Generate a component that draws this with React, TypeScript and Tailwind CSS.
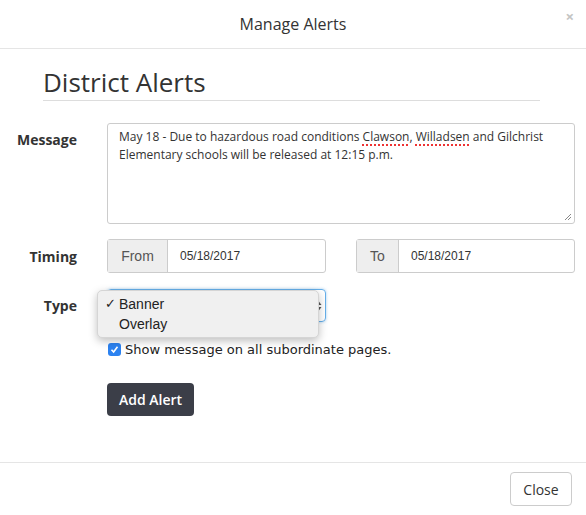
import React from "react";

const openSans = "font-['Open_Sans',sans-serif]";
const helv = "font-['Liberation_Sans',Arial,sans-serif]";

function DateGroup(props: { label: string; value: string; addonW: string }) {
  return (
    <div className="flex h-[34px] w-[219px] rounded-[3px] border border-[#ccc]">
      <div
        className={
          "flex items-center justify-center border-r border-[#ccc] bg-[#eee] text-[14px] text-[#555] " +
          helv +
          " " +
          props.addonW
        }
      >
        {props.label}
      </div>
      <div className={"flex flex-1 items-center pl-3 text-[12px] text-[#333] " + helv}>{props.value}</div>
    </div>
  );
}

export default function App() {
  return (
    <div className={"relative h-[515px] w-[586px] bg-white text-[#333] " + openSans}>
      {/* header */}
      <div className="relative flex h-[49px] items-center justify-center border-b border-[#e5e5e5]">
        <span className="text-[16px] text-[#333]">Manage Alerts</span>
        <span className="absolute right-[12px] top-[5px] text-[15px] font-bold text-[#c4c4c4]">×</span>
      </div>

      <div className="px-[43px] pt-[15px]">
        <h2 className="w-[497px] border-b border-[#ddd] text-[26px] leading-[36px] text-[#333]">
          District Alerts
        </h2>
      </div>

      {/* form */}
      <div className="mt-[22px] flex flex-col">
        <div className="flex">
          <div className="w-[77px] pt-[6px] text-right text-[14px] font-bold">Message</div>
          <div className="relative ml-[30px] h-[101px] w-[468px] rounded-[3px] border border-[#ccc] px-[11px] pt-[4px] text-[12px] leading-[18px] text-[#333]">
            May 18 - Due to hazardous road conditions{" "}
            <span className="underline decoration-[#e33] decoration-dotted decoration-[1.5px] underline-offset-[3px]">
              Clawson
            </span>
            ,{" "}
            <span className="underline decoration-[#e33] decoration-dotted decoration-[1.5px] underline-offset-[3px]">
              Willadsen
            </span>{" "}
            and Gilchrist Elementary schools will be released at 12:15 p.m.
            <svg className="absolute bottom-[2px] right-[2px]" width="8" height="8" viewBox="0 0 8 8">
              <path d="M7 1 L1 7 M7 4 L4 7" stroke="#888" strokeWidth="1" />
            </svg>
          </div>
        </div>

        <div className="mt-[15px] flex items-center">
          <div className="w-[77px] text-right text-[14px] font-bold">Timing</div>
          <div className="ml-[30px] flex gap-[30px]">
            <DateGroup label="From" value="05/18/2017" addonW="w-[60px]" />
            <DateGroup label="To" value="05/18/2017" addonW="w-[42px]" />
          </div>
        </div>

        <div className="mt-[16px] flex items-center">
          <div className="w-[77px] text-right text-[14px] font-bold">Type</div>
          <div className="relative ml-[30px] h-[33px] w-[219px] rounded-[4px] border border-[#66afe9] shadow-[0_0_3px_rgba(102,175,233,0.6)]">
            <svg className="absolute right-[3px] top-[10px]" width="7" height="12" viewBox="0 0 7 12">
              <path d="M0.5 5 L3.5 1 L6.5 5 Z M0.5 7 L3.5 11 L6.5 7 Z" fill="#555" />
            </svg>
            <div
              className={
                "absolute left-[-11px] top-[0px] w-[222px] rounded-[5px] border border-[#d5d5d5] bg-[#f0f0f0] py-[3px] text-[14px] leading-[20px] text-[#222] shadow-[0_3px_8px_rgba(0,0,0,0.25)] " +
                helv
              }
            >
              <div className="flex">
                <span className="w-[21px] pl-[7px] text-[13px]">✓</span>
                <span>Banner</span>
              </div>
              <div className="flex">
                <span className="w-[21px]"></span>
                <span>Overlay</span>
              </div>
            </div>
          </div>
        </div>

        <div className="ml-[108px] mt-[18px] flex items-center gap-[4px]">
          <span className="flex h-[13px] w-[13px] items-center justify-center rounded-[3px] bg-[#2c82f0]">
            <svg width="9" height="9" viewBox="0 0 9 9">
              <path d="M1.5 4.8 L3.6 7 L7.5 1.8" stroke="white" strokeWidth="1.6" fill="none" />
            </svg>
          </span>
          <span className="font-['DejaVu_Sans',Verdana,sans-serif] text-[13px] text-[#222]">
            Show message on all subordinate pages.
          </span>
        </div>

        <div className="ml-[107px] mt-[23px]">
          <div className="flex h-[33px] w-[87px] items-center justify-center rounded-[4px] bg-[#3b3e48] text-[14px] font-semibold text-white">
            Add Alert
          </div>
        </div>
      </div>

      {/* footer */}
      <div className="absolute bottom-0 left-0 right-0 flex h-[53px] items-center justify-end border-t border-[#e5e5e5] pr-[14px]">
        <div className="flex h-[34px] w-[62px] items-center justify-center rounded-[4px] border border-[#ccc] text-[14px] text-[#333]">
          Close
        </div>
      </div>
    </div>
  );
}
